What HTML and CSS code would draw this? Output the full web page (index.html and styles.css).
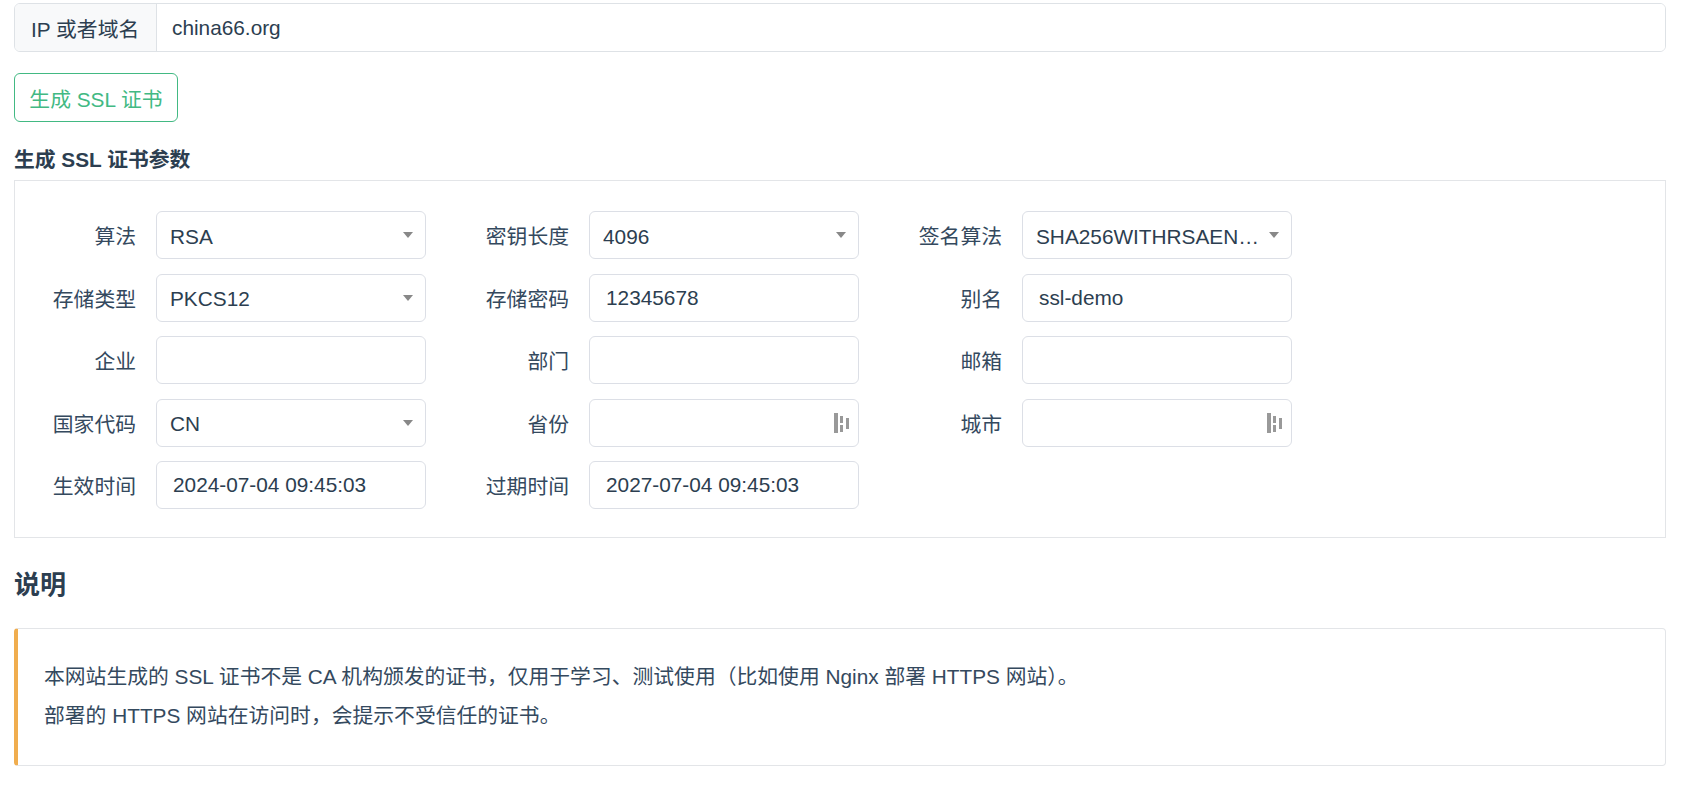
FILE: index.html
```html
<!DOCTYPE html>
<html lang="zh-CN">
<head>
  <meta charset="UTF-8">
  <meta name="viewport" content="width=device-width, initial-scale=1.0">
  <title>生成 SSL 证书</title>
  <link rel="stylesheet" href="styles.css">
</head>
<body>
  <div class="page">
    <!-- host -->
    <div class="input-group">
      <span class="addon">IP 或者域名</span>
      <input class="host-input" type="text" value="china66.org">
    </div>

    <button class="btn-outline">生成 SSL 证书</button>

    <div class="section-title">生成 SSL 证书参数</div>
    <div class="params">
      <div class="field">
        <label>算法</label>
        <div class="select"><span class="select-text">RSA</span><svg class="caret" viewBox="0 0 10 6"><path d="M0 0h10L5 6z"/></svg></div>
      </div>
      <div class="field">
        <label>密钥长度</label>
        <div class="select"><span class="select-text">4096</span><svg class="caret" viewBox="0 0 10 6"><path d="M0 0h10L5 6z"/></svg></div>
      </div>
      <div class="field">
        <label>签名算法</label>
        <div class="select"><span class="select-text">SHA256WITHRSAEN…</span><svg class="caret" viewBox="0 0 10 6"><path d="M0 0h10L5 6z"/></svg></div>
      </div>

      <div class="field">
        <label>存储类型</label>
        <div class="select"><span class="select-text">PKCS12</span><svg class="caret" viewBox="0 0 10 6"><path d="M0 0h10L5 6z"/></svg></div>
      </div>
      <div class="field">
        <label>存储密码</label>
        <input class="control" type="text" value="12345678">
      </div>
      <div class="field">
        <label>别名</label>
        <input class="control" type="text" value="ssl-demo">
      </div>

      <div class="field">
        <label>企业</label>
        <input class="control" type="text">
      </div>
      <div class="field">
        <label>部门</label>
        <input class="control" type="text">
      </div>
      <div class="field">
        <label>邮箱</label>
        <input class="control" type="text">
      </div>

      <div class="field">
        <label>国家代码</label>
        <div class="select"><span class="select-text">CN</span><svg class="caret" viewBox="0 0 10 6"><path d="M0 0h10L5 6z"/></svg></div>
      </div>
      <div class="field">
        <label>省份</label>
        <div class="control with-icon">
          <input type="text">
          <svg class="fill-icon" viewBox="0 0 16 20"><rect x="0" y="0" width="4" height="20"/><rect x="6" y="3" width="3" height="7"/><rect x="6" y="12" width="3" height="7"/><rect x="12" y="5" width="3" height="11"/></svg>
        </div>
      </div>
      <div class="field">
        <label>城市</label>
        <div class="control with-icon">
          <input type="text">
          <svg class="fill-icon" viewBox="0 0 16 20"><rect x="0" y="0" width="4" height="20"/><rect x="6" y="3" width="3" height="7"/><rect x="6" y="12" width="3" height="7"/><rect x="12" y="5" width="3" height="11"/></svg>
        </div>
      </div>

      <div class="field">
        <label>生效时间</label>
        <input class="control" type="text" value="2024-07-04 09:45:03">
      </div>
      <div class="field">
        <label>过期时间</label>
        <input class="control" type="text" value="2027-07-04 09:45:03">
      </div>
    </div>

    <h4>说明</h4>
    <div class="callout">
      <p>本网站生成的 SSL 证书不是 CA 机构颁发的证书，仅用于学习、测试使用（比如使用 Nginx 部署 HTTPS 网站）。</p>
      <p>部署的 HTTPS 网站在访问时，会提示不受信任的证书。</p>
    </div>
  </div>
</body>
</html>
```

FILE: styles.css
```css
body {
  margin: 0;
  font-family: "Liberation Sans", "Noto Sans CJK SC", sans-serif;
  font-size: 20.8px;
  color: #2c3e50;
  background: #fff;
}
.page {
  padding: 3px 17px 20px 14px;
}
input {
  font-family: inherit;
  font-size: inherit;
  color: #2c3e50;
  outline: none;
}
.input-group {
  display: flex;
  height: 49px;
  border: 1px solid #dee2e6;
  border-radius: 6px;
  box-sizing: border-box;
  overflow: hidden;
}
.addon {
  display: flex;
  align-items: center;
  width: 142px;
  box-sizing: border-box;
  padding: 0 16px;
  background: #f8f9fa;
  border-right: 1px solid #dee2e6;
  white-space: nowrap;
}
.host-input {
  flex: 1;
  border: none;
  padding: 0 15px;
  background: #fff;
}
.btn-outline {
  display: block;
  margin-top: 21px;
  height: 49px;
  width: 164px;
  padding: 0;
  font-family: inherit;
  font-size: inherit;
  color: #42b983;
  background: #fff;
  border: 1px solid #42b983;
  border-radius: 6px;
  cursor: pointer;
}
.section-title {
  margin: 22px 0 5px;
  font-weight: bold;
  line-height: 31px;
  color: #2c3e50;
}
.params {
  display: grid;
  grid-template-columns: repeat(3, 411px);
  column-gap: 22px;
  row-gap: 14.5px;
  padding: 30px 0 28px 0;
  border: 1px solid #e3e5e8;
}
.field {
  display: flex;
  align-items: center;
  gap: 20px;
}
.field label {
  width: 121px;
  text-align: right;
  color: #34495e;
  white-space: nowrap;
}
.control,
.select {
  width: 270px;
  height: 48px;
  box-sizing: border-box;
  border: 1px solid #dcdfe6;
  border-radius: 6px;
  background: #fff;
}
.control {
  padding: 0 16px;
}
.select {
  display: flex;
  align-items: center;
  padding: 0 12px 0 13px;
  gap: 8px;
}
.select-text {
  flex: 1;
  min-width: 0;
  padding-top: 3px;
  white-space: nowrap;
  overflow: hidden;
}
.caret {
  width: 10px;
  height: 6px;
  fill: #888;
  flex: none;
}
.with-icon {
  display: flex;
  align-items: center;
  padding: 0 8px 0 16px;
}
.with-icon input {
  flex: 1;
  min-width: 0;
  border: none;
  padding: 0;
}
.fill-icon {
  width: 16px;
  height: 20px;
  fill: #999;
  flex: none;
}
h4 {
  margin: 32px 0 27px;
  font-size: 26px;
  line-height: 31px;
  font-weight: bold;
  color: #2c3e50;
}
.callout {
  padding: 32px 26px 26px 26px;
  border: 1px solid #e3e5e8;
  border-left: 4px solid #f0ad4e;
  border-radius: 4px;
}
.callout p {
  margin: 0 0 8px;
  line-height: 31px;
  color: #34495e;
}
```
